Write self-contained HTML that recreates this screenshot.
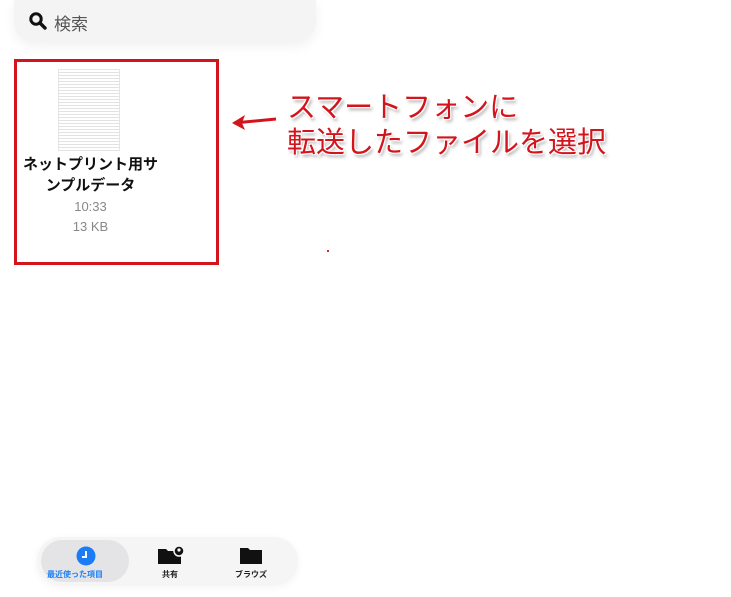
<!DOCTYPE html><html><head><meta charset="utf-8"><style>
body{margin:0;width:731px;height:597px;background:#fff;position:relative;overflow:hidden;font-family:"Liberation Sans","Noto Sans CJK JP",sans-serif}
.search{position:absolute;left:14px;top:0;width:302px;height:42px;background:#f4f4f5;border-radius:0 0 21px 21px;box-shadow:0 4px 12px rgba(0,0,0,0.06)}
.search span{position:absolute;left:40px;top:10px;font-size:17px;color:#555}
.box{position:absolute;left:14px;top:59px;width:199px;height:200px;border:3px solid #d3141c}
.doc{position:absolute;left:41px;top:7px;width:60px;height:80px;background:#fbfbfb;border:1px solid #e4e4e4;background-image:repeating-linear-gradient(#fff 0 2px,#e2e2e2 2px 3px),linear-gradient(90deg,transparent 33px,#ccc 33px 34px,transparent 34px)}
.name{position:absolute;left:-26px;width:199px;top:92px;text-align:center;font-weight:bold;font-size:15px;line-height:21px;color:#111}
.meta{position:absolute;left:-26px;width:199px;top:135px;text-align:center;font-size:13px;line-height:20px;color:#888}
.note{position:absolute;left:287px;top:91px;font-size:29px;line-height:35px;color:#d3141c;text-shadow:0 0 2px #fff,1px 1px 0 #fff,-1px -1px 0 #fff,1px -1px 0 #fff,-1px 1px 0 #fff,2px 3px 3px rgba(0,0,0,0.35)}
.tab{position:absolute;left:37px;top:537px;width:261px;height:48px;background:#f5f5f6;border-radius:24px;box-shadow:0 2px 8px rgba(0,0,0,0.05)}
.sel{position:absolute;left:4px;top:3px;width:88px;height:42px;background:#e4e4e6;border-radius:21px}
.lbl{position:absolute;font-size:8px;font-weight:bold;top:32px}
</style></head><body>
<div class="search"><svg style="position:absolute;left:15px;top:12px" width="18" height="18" viewBox="0 0 18 18"><circle cx="7" cy="7" r="5.2" fill="none" stroke="#111" stroke-width="3"/><path d="M11 11l5 5" stroke="#111" stroke-width="3.4" stroke-linecap="round"/></svg><span>検索</span></div>
<div class="box"><div class="doc"></div>
<div class="name">ネットプリント用サ<br>ンプルデータ</div>
<div class="meta">10:33<br>13 KB</div></div>
<svg style="position:absolute;left:230px;top:112px" width="50" height="20"><path d="M4 11 L46 7" stroke="#d3141c" stroke-width="3"/><path d="M2 11 L15 3 L12 11 L15 18Z" fill="#d3141c"/></svg>
<div class="note">スマートフォンに<br>転送したファイルを選択</div>
<div style="position:absolute;left:327px;top:250px;width:2px;height:2px;background:#c33"></div>
<div class="tab"><div class="sel"></div>
<svg style="position:absolute;left:39px;top:9px" width="20" height="20"><circle cx="10" cy="10" r="9.5" fill="#1a7df5"/><path d="M10 5v6h-4" stroke="#fff" stroke-width="2" fill="none"/></svg>
<div class="lbl" style="left:10px;color:#1a7df5">最近使った項目</div>
<svg style="position:absolute;left:120px;top:8px" width="28" height="20"><path d="M1 4h8l2 2h13v13H1z" fill="#111"/><circle cx="22" cy="6" r="5" fill="#111" stroke="#f5f5f6" stroke-width="1.5"/><circle cx="22" cy="5" r="1.6" fill="#fff"/></svg>
<div class="lbl" style="left:125px;color:#222">共有</div>
<svg style="position:absolute;left:202px;top:9px" width="24" height="19"><path d="M1 2h8l2 2h12v14H1z" fill="#111"/></svg>
<div class="lbl" style="left:198px;color:#222">ブラウズ</div>
</div>
</body></html>
